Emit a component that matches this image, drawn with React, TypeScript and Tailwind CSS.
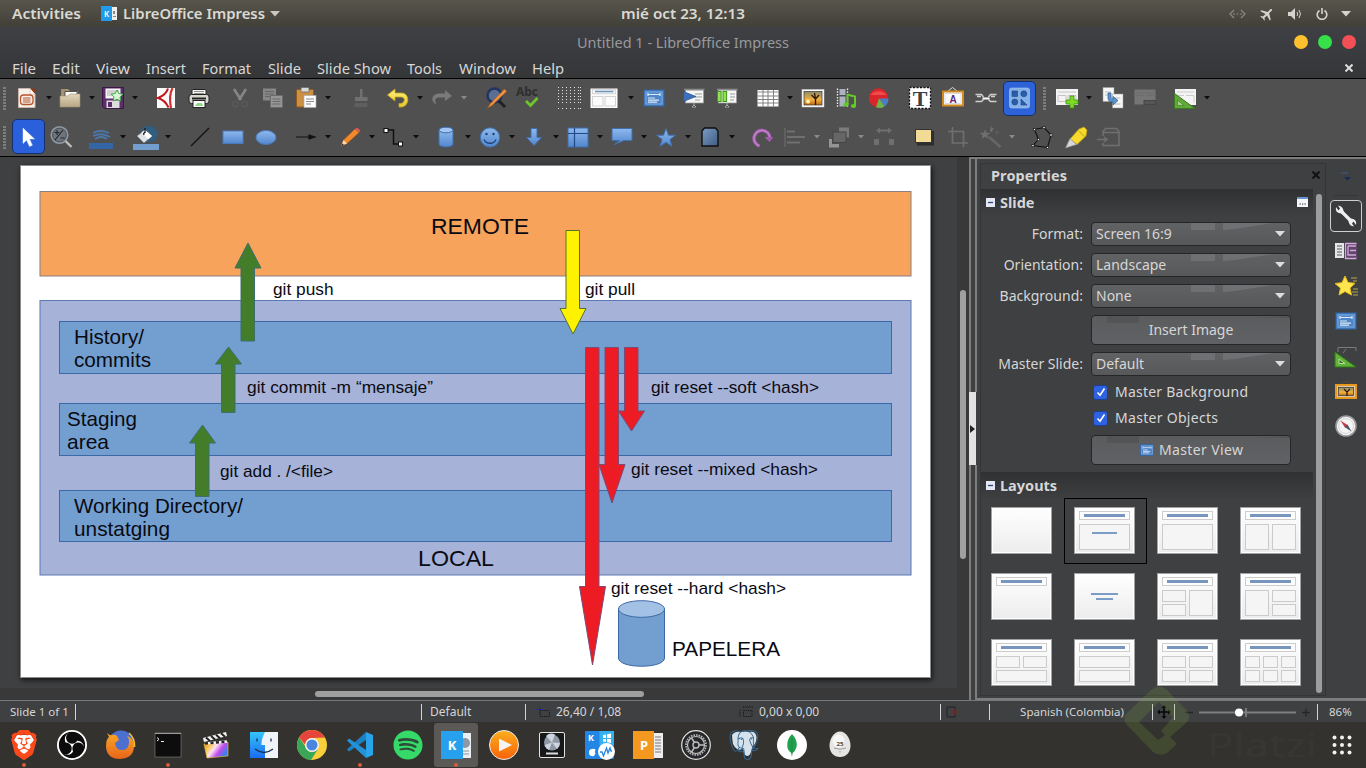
import React from "react";
import { SiBrave, SiObsstudio, SiPostgresql } from "react-icons/si";
import { FaSpotify } from "react-icons/fa";
import { MdAirplanemodeActive } from "react-icons/md";

const Defs = () => (
  <svg width="0" height="0" className="absolute">
    <defs>
      <linearGradient id="blue" x1="0" y1="0" x2="0" y2="1"><stop offset="0" stopColor="#8fb9ee" /><stop offset="1" stopColor="#5286cd" /></linearGradient>
      <linearGradient id="gold" x1="0" y1="0" x2="0" y2="1"><stop offset="0" stopColor="#fff27a" /><stop offset="1" stopColor="#e6c62c" /></linearGradient>
      <linearGradient id="tan" x1="0" y1="0" x2="0" y2="1"><stop offset="0" stopColor="#e2d6bd" /><stop offset="1" stopColor="#b8a684" /></linearGradient>
      <linearGradient id="paper" x1="0" y1="0" x2="0" y2="1"><stop offset="0" stopColor="#fff" /><stop offset="1" stopColor="#ececec" /></linearGradient>
      <linearGradient id="steel" x1="0" y1="0" x2="1" y2="1"><stop offset="0" stopColor="#7b9cc4" /><stop offset="1" stopColor="#3f5d83" /></linearGradient>
      <linearGradient id="sunset" x1="0" y1="0" x2="0" y2="1"><stop offset="0" stopColor="#8b8a6b" /><stop offset=".6" stopColor="#f2b23c" /><stop offset="1" stopColor="#c06a13" /></linearGradient>
      <linearGradient id="rainbow" x1="0" y1="0" x2="1" y2=".5"><stop offset="0" stopColor="#f56a4a" /><stop offset=".25" stopColor="#f5c23a" /><stop offset=".5" stopColor="#fbe0f5" /><stop offset=".75" stopColor="#c04be8" /><stop offset="1" stopColor="#3b7ff0" /></linearGradient>
      <linearGradient id="finder" x1="0" y1="0" x2="0" y2="1"><stop offset="0" stopColor="#35c4fb" /><stop offset="1" stopColor="#1a6cf0" /></linearGradient>
      <linearGradient id="fox" x1="0" y1="0" x2="0" y2="1"><stop offset="0" stopColor="#f9a825" /><stop offset="1" stopColor="#e8641b" /></linearGradient>
      <linearGradient id="play" x1="0" y1="0" x2="0" y2="1"><stop offset="0" stopColor="#fcae1c" /><stop offset="1" stopColor="#f8620b" /></linearGradient>
    </defs>
  </svg>
);

const slideLines = (
  <g>
    <rect x="2" y="4" width="20" height="16" fill="#4f86c9" stroke="#2f64a8" />
    <rect x="4" y="6" width="16" height="12" fill="none" stroke="#86b0e2" strokeWidth=".8" />
    <path d="M6 8.500H18M6 7v3M18 7v3M6 12h7M6 14.200h11M6 16.200h9" stroke="#dbe9f9" strokeWidth="1.200" fill="none" />
  </g>
);

const I: Record<string, React.ReactNode> = {
  new: <g><path d="M3.500 2.500H15L20 8V21.500H3.500Z" fill="#f7efe9" stroke="#c9b6aa" /><path d="M15 2.500l5 5.500v-5.500Z" fill="#8c3b18" /><path d="M15 2.500V8H20" fill="#fff" stroke="#c9b6aa" strokeWidth=".6" /><rect x="5.500" y="9" width="12.500" height="9.500" rx="3" fill="none" stroke="#b8562e" strokeWidth="1.300" /><path d="M8 12h7.500M8 14h7.500M8 16h7.500" stroke="#b8562e" strokeWidth="1.100" /></g>,
  open: <g><path d="M3 3h7l2 2h8v9H3Z" fill="#a39270" /><path d="M7 5.500h12v8H7Z" fill="#fff" stroke="#333" strokeWidth=".8" /><path d="M2 10h8l2-2h10v13H2Z" fill="url(#tan)" stroke="#a39270" strokeWidth=".6" /></g>,
  save: <g><path d="M1.500 1.500h21v21h-19l-2-2Z" fill="#5c2d6b" stroke="#3a1746" /><rect x="4.500" y="2.500" width="15" height="10" fill="#f4f4f4" /><path d="M6 5h12M6 7h12M6 9h12" stroke="#9d9d9d" strokeWidth=".8" /><rect x="5.500" y="14.500" width="13" height="7.500" fill="#dcdcdc" /><rect x="7" y="16" width="4" height="5" fill="#5c2d6b" /><path d="M16 4l1.800 3.500 4.200.7-3 2.800.6 4-3.600-1.800-3.600 1.800.6-4-3-2.800 4.200-.7Z" fill="#d8f6d6" stroke="#3fa84a" strokeWidth="1" /></g>,
  pdf: <g><rect x="3" y="2" width="18" height="20" fill="#fafafa" /><path d="M14 2.500q-2 6.500-10 9.500q7 2 10.500 9.500" fill="none" stroke="#c3161c" strokeWidth="2" /><path d="M18.500 2q-4 8-1.500 20" stroke="#cf3135" strokeWidth="2.200" fill="none" /></g>,
  print: <g><rect x="5" y="3.500" width="14" height="6" rx="1" fill="#f4f4f4" stroke="#222" /><path d="M7 5.500h10M7 7.500h10" stroke="#777" strokeWidth=".8" /><rect x="2" y="8.500" width="20" height="9" rx="2.500" fill="#d7d7d0" stroke="#222" /><path d="M5 12.500h14" stroke="#222" strokeWidth="2" /><rect x="6" y="14.500" width="12" height="7" fill="#fff" stroke="#222" /><path d="M7.500 20l3-3h4l2 3Z" fill="#8fd883" /></g>,
  cut: <g stroke="#868686" fill="none"><path d="M6 3l7 11M18 3l-7 11" strokeWidth="2.600" /><circle cx="7.500" cy="18" r="2.800" stroke="#5f5f5f" /><circle cx="16.500" cy="18" r="2.800" stroke="#5f5f5f" /></g>,
  copy: <g><rect x="2" y="2.500" width="13" height="12" fill="#868686" /><path d="M4 5.500h9M4 8h9M4 10.500h9" stroke="#666" /><rect x="9.500" y="9.500" width="12" height="12" fill="#959595" stroke="#6a6a6a" /><path d="M11.500 13h8M11.500 15.500h8M11.500 18h8" stroke="#6a6a6a" /></g>,
  paste: <g><rect x="2.500" y="3.500" width="17" height="17.500" rx="1" fill="#cc9045" stroke="#8f5a1c" /><rect x="7" y="1.500" width="8" height="4.500" rx="1" fill="#d9d9d9" stroke="#666" strokeWidth=".7" /><rect x="10" y="9.500" width="12" height="12" fill="#fcfcfc" stroke="#aaa" strokeWidth=".6" /><path d="M12 13h8M12 15.500h8M12 18h5" stroke="#8a8a8a" /></g>,
  brush: <g fill="#707070"><rect x="11" y="3" width="2.500" height="8" /><path d="M6 11h12.500v4H6Z" /><path d="M6 17h12.500l-.5 4H5Z" fill="#5f5f5f" /></g>,
  undo: <path d="M9 3L1.500 9l7.500 6v-4h6c4.500 0 4.500 5.500 0 6.500h-2v3.500h3c8-1.500 7.500-14-.5-14H9Z" fill="url(#gold)" stroke="#c8a820" strokeWidth=".8" />,
  redo: <path d="M15 4l7 6-7 5v-3.500H9c-4.500 0-4.500 4.500-2 7-7-2-6-11 2-11h6Z" fill="#7a7a7a" />,
  find: <g><circle cx="10.500" cy="9.500" r="7" fill="#5a6f93" stroke="#22345f" strokeWidth="2.500" /><path d="M15 15l6 6" stroke="#1f1f24" strokeWidth="3" /><path d="M20.500 3L6.500 17.500l-3 4.500 4.500-2.500L22.500 5.500Z" fill="#ee9440" stroke="#b45710" strokeWidth=".6" /></g>,
  abc: <g><text x="0" y="9.500" fontFamily="Noto Sans, sans-serif" fontWeight="700" fontSize="12" fill="#2e2e2e" textLength="22">Abc</text><path d="M10 15l4.500 4.500L21.500 12" fill="none" stroke="#6cc62c" strokeWidth="2.800" /></g>,
  grid: <g fill="#e0e0e0">{[0, 1, 2, 3, 4, 5, 6].map((a) => [0, 1, 2, 3, 4, 5, 6].map((b) => <rect key={a + "-" + b} x={a === 6 ? 23 : 1 + a * 4} y={b === 6 ? 22 : 1 + b * 3} width="1" height="1" />))}</g>,
  layout: <g><rect x="-1.500" y="2.500" width="27" height="19.500" fill="#fbfbfb" /><path d="M3 5.500h18.500" stroke="#6a95bd" strokeWidth="1.600" /><g fill="none" stroke="#cfcfcf" strokeWidth=".9"><rect x=".5" y="3.700" width="23" height="4" /><rect x=".5" y="10.500" width="10.500" height="9.500" /><rect x="13" y="10.500" width="10.500" height="9.500" /></g></g>,
  master: slideLines,
  show: <g><rect x="3.500" y="4" width="18" height="13" fill="#f6f6f6" stroke="#999" strokeWidth=".7" /><path d="M2 3.500h20.500" stroke="#8a8a8a" strokeWidth="1.600" /><path d="M13 8h7M13 11h7M13 14h5" stroke="#999" /><path d="M1.500 5.500L14 10.500 1.500 15.500Z" fill="#3d70bc" stroke="#27528f" strokeWidth=".7" /><path d="M12 17v2M10 21l2-2 2 2Z" stroke="#aaa" /></g>,
  show2: <g><rect x="3.500" y="4" width="18" height="13" fill="#f6f6f6" stroke="#999" strokeWidth=".7" /><path d="M2 3.500h20.500" stroke="#8a8a8a" strokeWidth="1.600" /><path d="M15 8h5M15 11h5M15 14h4" stroke="#999" /><rect x="2.500" y="5.500" width="3.600" height="10" fill="#8fdf58" stroke="#3e9c12" /><rect x="8" y="5.500" width="3.600" height="10" fill="#8fdf58" stroke="#3e9c12" /><path d="M12 17v2M10 21l2-2 2 2Z" stroke="#aaa" /></g>,
  table: <g><rect x="1.500" y="4" width="21" height="16.500" fill="#fdfdfd" /><path d="M1.500 6h21" stroke="#8b8b8b" strokeWidth="1" /><path d="M7 4v16.500M12 4v16.500M17.500 4v16.500M1.500 10h21M1.500 13.500h21M1.500 17h21" stroke="#777" strokeWidth=".9" /></g>,
  image: <g><rect x="1" y="3.500" width="22" height="17.500" fill="#fdfdfd" stroke="#d0d0d0" strokeWidth=".5" /><rect x="3" y="5.500" width="18" height="13.500" fill="url(#sunset)" stroke="#333" strokeWidth=".7" /><path d="M14.500 19v-6l-4-4M14.500 13l3.500-4M14.500 13l-1-6" stroke="#2c1a06" strokeWidth="1.400" fill="none" /><circle cx="7" cy="15.500" r="2" fill="#fff3b0" /></g>,
  media: <g><rect x="2" y="2.500" width="13" height="19" fill="#4c4c4c" /><path d="M3.500 2.500v19M13.500 2.500v19" stroke="#eee" strokeWidth="1.400" strokeDasharray="1.500 1.300" /><path d="M5.500 3h6v6h-6ZM5.500 10.500h6v10h-6Z" fill="#aab3bf" /><path d="M13 8.500l8 2v9" stroke="#62cc22" strokeWidth="2" fill="none" /><path d="M13.500 8.500V18" stroke="#62cc22" strokeWidth="2" /><ellipse cx="12" cy="18.500" rx="2.700" ry="2" fill="#62cc22" /><ellipse cx="19.500" cy="20" rx="2.700" ry="2" fill="#62cc22" /></g>,
  chart: <g><circle cx="11.500" cy="12" r="9.700" fill="#d8262a" /><path d="M12 12.500h9.500a9.500 9.500 0 0 1-4 8Z" fill="#4c7dc4" /><path d="M12 12.500l5.500 8a9 9 0 0 1-8.500.8Z" fill="#6cb748" /><path d="M3.500 9a9 7 0 0 1 16 0Z" fill="#ff6464" opacity=".6" /></g>,
  text: <g><rect x="1.500" y="1.500" width="21" height="21" fill="#fff" stroke="#111" strokeWidth="1.300" strokeDasharray="2 1.500" /><text x="12" y="20" textAnchor="middle" fontFamily="Liberation Serif, serif" fontWeight="700" fontSize="22" fill="#3c4147">T</text></g>,
  fontwork: <g><path d="M7 5l4.500-3.500L16 5" stroke="#ddd" fill="none" /><rect x="2" y="5.500" width="20" height="14" fill="#fbfbfb" stroke="#d18a1e" strokeWidth="2" /><rect x="4" y="7.500" width="16" height="10" fill="none" stroke="#b9b9d0" strokeWidth=".5" /><text x="12" y="16.500" textAnchor="middle" fontFamily="Liberation Sans, sans-serif" fontWeight="700" fontSize="10" fill="#5a2a7d">A</text></g>,
  link: <g fill="none" stroke="#cfcfcf" strokeWidth="1.400"><path d="M1.500 8.500h6l2 2.500M22.500 8.500h-6l-2 2.500M1.500 15.500h6l2-2M22.500 15.500h-6l-2-2M3 10.500h4M17 10.500h4" /><path d="M8.500 12.500h7" stroke="#fff" strokeWidth="2" /></g>,
  shapes: <g><rect x="1.500" y="2" width="20" height="20" rx="2" fill="#85b0e8" stroke="#a8c9f3" strokeWidth=".6" /><g fill="#2a5da8" stroke="#1b4686" strokeWidth=".6"><rect x="4" y="5" width="5.500" height="5.500" /><circle cx="15.800" cy="7.800" r="3" /><circle cx="6.800" cy="16" r="3" /><path d="M13 13l6 6h-6Z" /></g></g>,
  newslide: <g><rect x="1" y="3" width="22" height="16" fill="#f3f3f3" /><path d="M3 6h18M3 9.500h8v6H3ZM13 9.500h8v6h-8Z" stroke="#c4c4c4" fill="none" /><path d="M15 10h4v4h4v4h-4v4h-4v-4h-4v-4h4Z" fill="#7ddb28" stroke="#3c8e0a" strokeWidth=".8" /></g>,
  dup: <g><rect x="2" y="1.500" width="11" height="14" fill="#f6f6f6" stroke="#999" strokeWidth=".5" /><rect x="11.500" y="8" width="10.500" height="14" fill="#f6f6f6" stroke="#999" strokeWidth=".5" /><path d="M4 6h6M4 9h6M13.500 12h6M13.500 18h6" stroke="#bbb" /><path d="M7 7v5c0 3 2 4 5 4v3l5-4.500-5-4v2.500c-2 0-2-1-2-6Z" fill="#5c93c9" stroke="#2a5c90" strokeWidth=".7" /></g>,
  del: <g><rect x="1.500" y="3.500" width="21" height="15" fill="#757575" /><path d="M3 7h18M3 9.500h8M13 9.500h8" stroke="#6c6c6c" /><rect x="11" y="14.500" width="11.500" height="4" fill="#565656" stroke="#454545" /></g>,
  green: <g><rect x="2" y="3" width="21" height="16" fill="#f4f4f4" /><path d="M4 6h17M4 9.500h7M13 9.500h8v7" stroke="#ccc" fill="none" /><path d="M1.500 7.500V22.500H22Z" fill="#60a83a" stroke="#3b7a1c" /><path d="M4.500 14v5.500H11Z" fill="#9fd182" stroke="#3b7a1c" strokeWidth=".6" /></g>,
  pointer: <path d="M6 3V18.500l3.600-3.300 3 6.300 2.800-1.300-2.900-6.200H17.500Z" fill="#fff" stroke="#dfe6f5" strokeWidth=".5" />,
  zoom: <g><circle cx="10.500" cy="10" r="8.200" fill="#6f757b" stroke="#8e969e" strokeWidth="1.800" /><circle cx="10.500" cy="10" r="6.800" fill="none" stroke="#3e4a55" strokeWidth=".8" /><path d="M14 5l-8 10M5.500 7.500h5M8 5v5M11.500 13h4" stroke="#1e252c" strokeWidth="1.100" /><path d="M16.500 16l6 6" stroke="#bcbcbc" strokeWidth="2.400" /></g>,
  linecolor: <g fill="none"><path d="M4 8q7-4 16 0M4 11q8-4 17 1M6 14q6-4 12 0" stroke="#4d76a8" strokeWidth="1.800" /><rect x="0" y="18" width="24" height="6" fill="#3465a4" /></g>,
  fill: <g><circle cx="15" cy="9" r="8.500" fill="#27618f" opacity=".75" /><path d="M3 11l8-6 7 6-8 7Z" fill="#dfe3e6" stroke="#7b858d" strokeWidth=".7" /><path d="M11 5l7 6-3.500 3-7-6.500Z" fill="#fff" /><path d="M11 3v5M11 8q-2-1-1 2" stroke="#111" strokeWidth="1.200" fill="none" /><rect x="-1" y="19" width="26" height="6" fill="#729fcf" /></g>,
  line: <path d="M3 21L21 3" stroke="#111" strokeWidth="1.200" />,
  rect: <rect x="2" y="6" width="20" height="12.500" fill="url(#blue)" stroke="#4a7abb" />,
  ellipse: <ellipse cx="12" cy="12.500" rx="10" ry="7" fill="url(#blue)" stroke="#4a7abb" />,
  arrow: <path d="M2 12h14M15 10l6 2-6 2Z" stroke="#111" fill="#111" strokeWidth="1.200" />,
  pencil: <g><path d="M3.500 20.500l2-5.500L17 4l4 3.500L9 18.500Z" fill="#f08a2b" stroke="#b65a12" strokeWidth=".6" /><path d="M17 4l2-1.500 3.500 3L21 7.500Z" fill="#e0575d" /><path d="M3.500 20.500l2-5.500 3.500 3.500Z" fill="#f3dcb8" /><path d="M3.500 20.500l.8-2 1.500 1.200Z" fill="#222" /></g>,
  connector: <g><path d="M4 5h7.500v14H18" fill="none" stroke="#111" strokeWidth="1.500" /><rect x="2" y="3.500" width="4" height="4" fill="#fff" stroke="#111" /><rect x="16.500" y="17" width="4" height="4" fill="#fff" stroke="#111" /></g>,
  cylinder: <g><path d="M5 5v14c0 4 14 4 14 0V5Z" fill="url(#blue)" stroke="#3f6fae" /><ellipse cx="12" cy="5" rx="7" ry="2.800" fill="#a3c7f2" stroke="#3f6fae" /></g>,
  smiley: <g><circle cx="12" cy="12.500" r="9.700" fill="url(#blue)" stroke="#3f6fae" /><circle cx="8.500" cy="9" r="1.200" fill="#1c4278" /><circle cx="15.500" cy="9" r="1.200" fill="#1c4278" /><path d="M6 14.500c2 5 10 5 12 0" fill="none" stroke="#1c4278" strokeWidth="1.300" /></g>,
  down: <path d="M9 3.500h6v9h4.500L12 20.500 4.500 12.500H9Z" fill="url(#blue)" stroke="#3f6fae" />,
  flow: <g><rect x="2" y="3" width="20" height="19" fill="url(#blue)" stroke="#3f6fae" /><path d="M8.500 3v19M2 8.500h20" stroke="#1f4a85" strokeWidth="1.200" /></g>,
  callout: <path d="M3 3.500h18q1 0 1 1V14.500q0 1-1 1H14l-9.500 4 5-4H3q-1 0-1-1V4.500q0-1 1-1Z" fill="url(#blue)" stroke="#3f6fae" />,
  star: <path d="M12 3.500l2.500 6.700h7l-5.500 4.300 2 7L12 17.300 6 21.500l2-7L2.500 10.200h7Z" fill="url(#blue)" stroke="#3f6fae" />,
  box3d: <path d="M6.500 3h11L20 6v15H4V6Z" fill="url(#steel)" stroke="#0f0f0f" strokeWidth="1.400" />,
  rotate: <g><path d="M9.500 21a8 8 0 1 1 10.500-8" fill="none" stroke="#a05bab" strokeWidth="3.600" /><path d="M9.500 21a8 8 0 1 1 10.500-8" fill="none" stroke="#c58ccd" strokeWidth="1.200" /><path d="M14.500 12h9l-4 5Z" fill="#a05bab" /></g>,
  align: <g stroke="#707070" fill="none"><path d="M2 3v19" /><path d="M4 6.500h8M4 12h18M4 17.500h13" strokeWidth="2.200" /></g>,
  arrange: <g><path d="M12 2.500h10v10h-4V7h-6Z" fill="#7b7b7b" /><rect x="6" y="7" width="13" height="10.500" fill="#666" stroke="#444" /><path d="M2 14h3v5h7v3.500H2Z" fill="#959595" /></g>,
  distribute: <g fill="#6f6f6f"><path d="M4 5.500l4-3v2h8v-2l4 3-4 3v-2H8v2Z" /><rect x="2" y="14" width="5" height="6" /><rect x="17" y="14" width="5" height="6" /></g>,
  shadow: <g><rect x="5" y="6" width="17" height="14.500" fill="#1e1e1e" opacity=".7" /><rect x="3.500" y="4.500" width="16" height="13" fill="#f2dc95" stroke="#333" /></g>,
  crop: <path d="M6.500 2v16H22M2 6.500h15.500V22" fill="none" stroke="#6f6f6f" strokeWidth="1.700" />,
  wand: <g><path d="M11 12L22.500 22" stroke="#666" strokeWidth="2.600" /><path d="M7 5l1.300 3L12 8l-2.800 2 .8 3.300L7 11.500l-3 1.800.8-3.300L2 8l3.700 0ZM13 1l.8 2.200 2.200.300-1.700 1.500L14 7l-2-1M19 5.500v4M17 7.500h4" fill="#707070" stroke="#707070" strokeWidth=".4" /></g>,
  points: <g><path d="M4.500 4.500l9.500-2 7 7.500-3.500 12.500L3 20.500l5.500-6Z" fill="none" stroke="#111" strokeWidth="1.100" /><g fill="#fff" stroke="#111" strokeWidth=".7">{[[4.5, 4.5], [14, 2.5], [21, 10], [17.5, 22.5], [3, 20.5], [8.5, 14.5]].map(([x, y]) => <rect key={x} x={x - 1.100} y={y - 1.100} width="2.200" height="2.200" />)}</g></g>,
  glue: <g><path d="M6 14L15 4l5-2 3 3-1 6-9 8.500Z" fill="#f6da2e" stroke="#b9970d" strokeWidth=".7" /><path d="M15 6l6 6" stroke="#d8b810" strokeWidth="1.300" /><path d="M1.500 23L6 13.500l6.500 6Z" fill="#d7d7d7" stroke="#8e8e8e" strokeWidth=".6" /></g>,
  extrude: <g fill="none" stroke="#6f6f6f" strokeWidth="1.600"><path d="M6 11V6.500l2.500-3h11L22 6.500v14H6V18M6 7.500h16" /><path d="M0 14.500h9M7 12l3 2.500-3 2.500" /></g>,
};

const Icon = ({ name }: { name: string }) => (
  <svg viewBox="0 0 24 24" className="size-6 shrink-0 overflow-visible">{I[name]}</svg>
);

type Tool = [name: string, margin: string, menu?: number];
const row1a: Tool[] = [
  ["new", "ml-[8px]", 1], ["open", "ml-px", 1], ["save", "ml-px", 1], ["pdf", "ml-[11px]"], ["print", "ml-[9px]"], ["cut", "ml-[17px]"], ["copy", "ml-[9px]"],
  ["paste", "ml-[9px]", 1], ["brush", "ml-[13px]"], ["undo", "ml-[13px]", 1], ["redo", "ml-[2px]", 2], ["find", "ml-[12px]"], ["abc", "ml-[8px]"], ["grid", "ml-[17px]"],
  ["layout", "ml-[11px] mr-[6px]", 3], ["master", "ml-[2px]"], ["show", "ml-[16px]"], ["show2", "ml-[9px]"], ["table", "ml-[17px]", 1], ["image", "ml-[3px]"],
  ["media", "ml-[9px]"], ["chart", "ml-[9px]"], ["text", "ml-[17px]"], ["fontwork", "ml-[9px]"], ["link", "ml-[9px]"],
];
const row1b: Tool[] = [["newslide", "ml-[8px]", 1], ["dup", "ml-[4px]"], ["del", "ml-[8px]"], ["green", "ml-[16px]", 1]];
const row2: Tool[] = [
  ["zoom", "ml-[4px]"], ["linecolor", "ml-[16px]", 1], ["fill", "ml-px", 1], ["line", "ml-[10px]"], ["rect", "ml-[9px]"], ["ellipse", "ml-[9px]"], ["arrow", "ml-[16px]", 1],
  ["pencil", "ml-0", 1], ["connector", "ml-0", 1], ["cylinder", "ml-[8px]", 1], ["smiley", "ml-0", 1], ["down", "ml-0", 1], ["flow", "ml-0", 1], ["callout", "ml-0", 1],
  ["star", "ml-0", 1], ["box3d", "ml-0", 1], ["rotate", "ml-[8px]"], ["align", "ml-[9px]", 2], ["arrange", "ml-0", 2], ["distribute", "ml-px"], ["shadow", "ml-[16px]"],
  ["crop", "ml-[10px]"], ["wand", "ml-[8px]", 2], ["points", "ml-[8px]"], ["glue", "ml-[10px]"], ["extrude", "ml-[9px]"],
];

const Tools = ({ items, wide }: { items: Tool[]; wide?: boolean }) => (
  <>
    {items.map(([name, margin, menu]) => (
      <div key={name} className={`flex shrink-0 items-center ${margin}`}>
        <Icon name={name} />
        {menu && (
          <span className={`flex justify-center ${wide ? "w-5" : "w-[18px] pl-[2px]"}`}>
            <svg viewBox="0 0 6 4" className={`h-[4px] w-[6px] shrink-0 ${menu === 3 ? "translate-x-[5px]" : ""}`}><path d="M0 0H6L3 3.500Z" fill={menu === 2 ? "#8a8a8a" : "#0d0d0d"} /></svg>
          </span>
        )}
      </div>
    ))}
  </>
);

const Handle = ({ className }: { className: string }) => (
  <svg viewBox="0 0 4 24" className={`h-6 w-1 shrink-0 ${className}`}><path d="M1.500 1v23" stroke="#7e7e7e" strokeWidth="3" strokeDasharray="2 1" /></svg>
);

const menus: [string, string, string][] = [
  ["File", "w-[40px]", "24"], ["Edit", "w-[44px]", "28"], ["View", "w-[50px]", "34"], ["Insert", "w-[56px]", "40"], ["Format", "w-[66px]", "49"],
  ["Slide", "w-[49px]", "33"], ["Slide Show", "w-[90px]", "74"], ["Tools", "w-[52px]", "35"], ["Window", "w-[73px]", "57"], ["Help", "w-[40px]", "32"],
];

const arrowUp = (x: number, tip: number, neck: number, end: number) => `M${x} ${tip}L${x + 13} ${neck}H${x + 6.5}V${end}H${x - 7}V${neck}H${x - 13}Z`;

const labels: [string, number, number, number, number][] = [
  ["REMOTE", 431, 234, 98, 22.7], ["LOCAL", 418, 566, 76, 22.7], ["PAPELERA", 672, 656, 108, 20.5],
  ["History/", 74, 344, 70, 20.7], ["commits", 74, 367, 77, 20.7], ["Staging", 67, 426, 70, 20.7], ["area", 67, 449, 42, 20.7],
  ["Working Directory/", 74, 513, 169, 20.7], ["unstatging", 74, 536, 96, 20.7],
  ["git push", 273, 295, 60.5, 17], ["git pull", 585, 295, 50, 17], ["git commit -m “mensaje”", 247, 393, 186, 17], ["git add . /<file>", 220, 477, 113, 17],
  ["git reset --soft <hash>", 651, 393, 168, 17], ["git reset --mixed <hash>", 631, 475, 187, 17], ["git reset --hard <hash>", 611, 594, 175, 17],
];

const Diagram = () => (
  <svg viewBox="21 166 909 511" className="block h-full w-full">
    <rect x="40" y="191.500" width="871" height="84.500" fill="#f7a35b" stroke="#8a7f84" />
    <rect x="40" y="300.500" width="871" height="274.500" fill="#a6b2d8" stroke="#5c79b0" />
    {[[321.5, 52], [403.5, 52], [490.5, 51]].map(([y, h]) => <rect key={y} x="59.500" y={y} width="832" height={h} fill="#729fcf" stroke="#3c68a5" />)}
    <g fill="#437d29" stroke="#3d6f6d" strokeWidth="1">
      <path d={arrowUp(248, 243, 268, 341)} /><path d={arrowUp(228.5, 347, 364, 412.500)} /><path d={arrowUp(202.500, 425, 443, 496.500)} />
    </g>
    <path d={arrowUp(573, 334, 308.500, 230.500)} fill="#fff200" stroke="#56702e" />
    <g fill="#ed1c24" stroke="#7a4a78">
      <path d={arrowUp(592.500, 665, 586.500, 347.500)} /><path d={arrowUp(612, 503, 464.500, 347.500)} /><path d={arrowUp(631.500, 431, 411, 347.500)} />
    </g>
    <path d="M618.500 609v49c0 11 46 11 46 0v-49Z" fill="#729fcf" stroke="#3c68a5" />
    <ellipse cx="641.500" cy="609" rx="23" ry="8.300" fill="#a3c1e4" stroke="#3c68a5" />
    <g fontFamily="Liberation Sans, Arial, sans-serif" fill="#0a0a12">
      {labels.map(([t, x, y, w, s]) => <text key={t} x={x} y={y} fontSize={s} textLength={w} lengthAdjust="spacingAndGlyphs">{t}</text>)}
    </g>
  </svg>
);

const Select = ({ label, value }: { label: string; value: string }) => (
  <div className="flex h-6 items-center">
    <span className="w-[102px] shrink-0 text-right">{label}</span>
    <div className="relative ml-2 flex h-6 w-[200px] items-center justify-between overflow-hidden rounded-[4px] border border-[#252628] bg-linear-to-b from-[#616264] to-[#575859] pr-[5px] pl-1">
      <svg viewBox="0 0 198 22" className="absolute inset-0 h-full w-full"><path d="M99 0h24v7H99ZM131 0h50l-38 6-12 1Z" fill="#747678" opacity=".75" /></svg>
      <span className="relative">{value}</span>
      <svg viewBox="0 0 10 6" className="relative h-[6px] w-[10px]"><path d="M0 0H10L5 5.500Z" fill="#dedede" /></svg>
    </div>
  </div>
);

const Button = ({ children }: { children: React.ReactNode }) => (
  <div className="relative ml-[110px] flex h-[30px] w-[200px] items-center justify-center gap-1 overflow-hidden rounded-[4px] border border-[#252628] bg-linear-to-b from-[#5b5c5e] to-[#606164]">
    <svg viewBox="0 0 198 28" className="absolute inset-0 h-full w-full"><path d="M15 0h32v7H15ZM160 2l36-2v2Z" fill="#505153" opacity=".7" /></svg>
    {children}
  </div>
);

const Check = ({ label, len }: { label: string; len: number }) => (
  <div className="ml-[112px] flex h-[26px] items-center gap-[7px]">
    <span className="grid size-[15px] place-items-center rounded-[3px] border border-[#1c3f9a] bg-[#2f62e0]">
      <svg viewBox="0 0 12 12" className="size-3"><path d="M2.500 6.500L5 9.200 9.500 2.500" fill="none" stroke="#fff" strokeWidth="1.600" /></svg>
    </span>
    <svg className="h-5 w-[140px] overflow-visible"><text y="14.500" textLength={len} fill="currentColor">{label}</text></svg>
  </div>
);

const Section = ({ title, more }: { title: string; more?: boolean }) => (
  <div className="mr-[12px] flex h-[30px] items-center bg-linear-to-b from-[#303133] to-[#404143] pb-[3px] pl-[5px]">
    <svg viewBox="0 0 9 9" className="mb-px size-[9px]"><rect width="9" height="9" fill="#e3e8f4" /><path d="M2 4.500h5" stroke="#2b4577" strokeWidth="1.300" /></svg>
    <span className="ml-[5px] text-[14.5px] leading-none font-bold">{title}</span>
    {more && <svg viewBox="0 0 11 10" className="mr-[5px] mb-px ml-auto h-[10px] w-[11px]"><rect width="11" height="10" fill="#f4f6fa" /><path d="M0 1h11" stroke="#6b94cf" strokeWidth="2" /><path d="M2.500 7h1.200M5 7h1.200M7.500 7h1.200" stroke="#222" strokeWidth="1.200" /></svg>}
  </div>
);

const panes: number[][][] = [
  [], [[5, 17, 50, 25]], [[5, 17, 50, 25]], [[5, 17, 23, 25], [32, 17, 23, 25]],
  [], [], [[5, 17, 23, 11], [5, 31, 23, 11], [32, 17, 23, 25]], [[5, 17, 23, 25], [32, 17, 23, 11], [32, 31, 23, 11]],
  [[5, 17, 23, 11], [32, 17, 23, 11], [5, 31, 50, 11]], [[5, 17, 50, 11], [5, 31, 50, 11]],
  [[5, 17, 23, 11], [32, 17, 23, 11], [5, 31, 23, 11], [32, 31, 23, 11]],
  [[5, 17, 14, 11], [23, 17, 14, 11], [41, 17, 14, 11], [5, 31, 14, 11], [23, 31, 14, 11], [41, 31, 14, 11]],
];

const Thumb = ({ i }: { i: number }) => (
  <svg viewBox="0 0 61 47" className="h-[47px] w-[61px]">
    <rect x=".500" y=".500" width="60" height="46" fill="url(#paper)" stroke="#a2a2a2" />
    <rect x="1.500" y="1.500" width="58" height="44" fill="none" stroke="#fff" />
    {i !== 0 && i !== 5 && <g><rect x="5.500" y="4.500" width="50" height="8" fill="#fdfdfd" stroke="#cdcdcd" /><path d="M10 8.500H51" stroke="#7896bd" strokeWidth="3" /></g>}
    {panes[i].map(([x, y, w, h]) => <rect key={`${x}-${y}`} x={x + 0.5} y={y + 0.5} width={w} height={h} fill="#f5f5f5" stroke="#cbcbcb" />)}
    {i === 1 && <path d="M18 26H43" stroke="#7b9cc6" strokeWidth="2" />}
    {i === 5 && <path d="M17 21H44M22 26H39" stroke="#7b9cc6" strokeWidth="2" />}
  </svg>
);

const tabs: React.ReactNode[] = [
  <g key="p"><path d="M1 4h9v15H1Z" fill="#e6e6e6" /><path d="M3 7h5M3 10h5M3 13h5M3 16h5" stroke="#555" /><path d="M12 4h11v15H12Z" fill="#8a4a98" opacity=".45" /><path d="M11.500 4v15.500h11M14 7v9h8M11.500 4.500h11M14 7h8M16 11.500h6" stroke="#d3a8dc" fill="none" strokeWidth="1.300" /></g>,
  <g key="s"><path d="M11 2l3 6.500 7 .8-5 4.800 1.500 7L11 17.500 5 21l1.500-7L1 9.500l7-.8Z" fill="#ffe650" stroke="#e5bd15" /><path d="M17 4h6M19 7h4M19 15h5M18 18h6M19 21h5" stroke="#b5a84a" strokeWidth="1" /></g>,
  <g key="m">{slideLines}</g>,
  <g key="t"><path d="M4 3.500H22M4 3.500V8M22 3.500V7M12 5l-3 4" stroke="#7b7b7b" fill="none" /><path d="M1 8V23H22Z" fill="#61b23a" stroke="#2c7a13" /><path d="M5 15v4.500h6Z" fill="#3f6b2c" stroke="#b3e096" /></g>,
  <g key="g"><path d="M7 5l5-3 5 3" stroke="#5e4a27" fill="none" /><rect x="2" y="6" width="20" height="13" fill="#d9c9a8" stroke="#e8971d" strokeWidth="2" /><rect x="4.500" y="8.500" width="15" height="8" fill="url(#sunset)" stroke="#333" strokeWidth=".7" /><path d="M13 17v-4l-3-3M13 13l3-3" stroke="#2c1a06" strokeWidth="1.300" fill="none" /></g>,
  <g key="c"><circle cx="12" cy="12" r="10" fill="#f4f4f4" stroke="#9b9b9b" strokeWidth="1.600" /><circle cx="12" cy="12" r="7.500" fill="none" stroke="#c9c9c9" strokeWidth=".7" /><path d="M6.500 6.500l7 4.500-2.500 2.500Z" fill="#d0363f" /><path d="M17.500 17.500l-7-4.500 3-2.500Z" fill="#4b5563" /></g>,
];

const dock: React.ReactNode[] = [
  <g key="brave"><path d="M8 5h14l3 5-2 10-8 7-8-7L5 10Z" fill="#fff" /><SiBrave x={0} y={0} size={30} color="#fa4a1c" /></g>,
  <g key="obs"><circle cx="15" cy="15" r="15" fill="#fff" /><circle cx="15" cy="15" r="13.700" fill="#0c0c0c" /><SiObsstudio x={0.5} y={0.5} size={29} color="#fff" /></g>,
  <g key="fox"><circle cx="16" cy="13.500" r="13" fill="#4c70d0" /><path d="M2 3q3 3 5 2 3-1 5 1l2 4-4 3q1 8 8 7 6-1 6-8 0-4-2-6 6 2 7 8 1 14-14 15Q2 29 1 17q0-8 3-10Z" fill="url(#fox)" /><path d="M24 3q6 5 5.500 14" fill="none" stroke="#f9c12e" strokeWidth="1.500" /></g>,
  <g key="term"><rect x="2" y="3" width="26" height="24" fill="#0d0d0d" stroke="#999" strokeWidth=".5" /><path d="M2 3.500h26" stroke="#9c9c9c" /><path d="M4 7.500l2 1.800-2 1.700M8 11.500h3" stroke="#eee" fill="none" /></g>,
  <g key="fcp"><path d="M3 14l24-2v14L6 28Z" fill="url(#rainbow)" stroke="#e9c93a" strokeWidth=".6" /><path d="M2 8l23-6 1 4L3 12Z" fill="#f3f3f3" /><path d="M5 7.500l4 3.500M10 6l4 3.500M15 4.700l4 3.500M20 3.300l4 3.500" stroke="#222" strokeWidth="2" /><path d="M4 13.500l22-2" stroke="#f3f3f3" strokeWidth="2.500" /><path d="M4 13.500l22-2" stroke="#222" strokeWidth="2.500" strokeDasharray="3 2.500" /></g>,
  <g key="finder"><rect x="1" y="2" width="28" height="26" fill="#f0f3f8" /><path d="M1 2h15q-4 8-3.500 13h3.500V28H1Z" fill="url(#finder)" /><path d="M8 8.500v3M22 8.500v3M6 19q9 7 18 0" stroke="#18304f" fill="none" strokeWidth="1.300" /></g>,
  <g key="chrome"><circle cx="15" cy="15" r="15" fill="#f9cf3b" /><path d="M2 7.500A15 15 0 0 1 28 7.500L15 8Q9 9 8.500 15Z" fill="#e5453a" /><path d="M2 7.500A15 15 0 0 0 14 30l7-11q-4 4-9 2.500Z" fill="#39a757" /><circle cx="15" cy="15" r="7" fill="#f4f4f4" /><circle cx="15" cy="15" r="5.500" fill="#4a86e0" /></g>,
  <g key="code"><path d="M21 2L4 17.500 2 19.500 4 21.500 21 10Z" fill="#1b80c4" /><path d="M21 28L4 12.500 2 10.500 4 8.500 21 20Z" fill="#2392d8" /><path d="M21 2l7 3v20L21 28Z" fill="#29a3ea" /></g>,
  <g key="spot"><circle cx="15" cy="15" r="13" fill="#2f4a38" /><FaSpotify x={0} y={0} size={30} color="#35d967" /></g>,
  <g key="impress"><rect x="14" y="3" width="16" height="25" fill="#eceff1" /><circle cx="24" cy="13" r="5" fill="#8e98a5" /><path d="M22 21h6M22 24h6" stroke="#8e98a5" /><rect x="0" y="1" width="22" height="28" fill="#27a1ed" /><text x="11" y="20" textAnchor="middle" fontFamily="Noto Sans, sans-serif" fontSize="13" fontWeight="700" fill="#fff">K</text></g>,
  <g key="play"><circle cx="15" cy="15" r="14.500" fill="url(#play)" stroke="#e8edf0" strokeWidth="1" /><path d="M10 8.500L23 15 10 21.500Z" fill="#f4f4f4" /></g>,
  <g key="logic"><rect x="2.500" y="2.500" width="25" height="25" rx="1.500" fill="#17181a" stroke="#e4e4e4" /><circle cx="15" cy="12.500" r="8" fill="#8e98a6" /><path d="M15 12.500L9 6a8 8 0 0 1 9-1.500ZM15 12.500l8 .5a8 8 0 0 1-3 6ZM15 12.500l-3 7.500a8 8 0 0 1-4.500-5Z" fill="#cdd6e0" /><path d="M9 23.500h12" stroke="#dcdcdc" strokeWidth="2" /></g>,
  <g key="wine"><rect x="0" y="1" width="29" height="28" rx="1" fill="#2386e4" /><path d="M14.500 1H29V15H14.500Z" fill="#35b1f1" /><text x="3" y="11" fontFamily="Noto Sans, sans-serif" fontSize="9" fontWeight="700" fill="#fff">K</text><path d="M18 5l3-.5v3.500h-3ZM22 4.300l4-.8V8h-4ZM18 9h3v3l-3-.5ZM22 9h4v4l-4-.8Z" fill="#fff" /><path d="M7 19q3-1 3.500 1-1.500 2 0 3.500-1.500 3.500-3.500 2.500-3 0-3-3.500 0-3.500 3-3.500Z" fill="#fff" /><circle cx="21.500" cy="21.500" r="8.500" fill="#fff" /><path d="M15 22h2l1.500 4 3-8 1.500 5 2-5 1 3h1" fill="none" stroke="#2386e4" strokeWidth="1.300" /></g>,
  <g key="ppt"><rect x="14" y="3" width="16" height="25" fill="#eee" /><path d="M22 7h6M22 10h6M22 13h6M22 16h6M22 19h6M22 22h6" stroke="#777" /><rect x="0" y="1" width="21" height="28" fill="#f5981f" /><text x="11" y="20" textAnchor="middle" fontFamily="Noto Sans, sans-serif" fontSize="13" fontWeight="700" fill="#fff">P</text></g>,
  <g key="gear" fill="none"><circle cx="15" cy="15" r="14.300" fill="#26272b" stroke="#e2e2e2" strokeWidth="1.200" /><circle cx="15" cy="15" r="10" stroke="#b5b5b5" strokeWidth="1.700" strokeDasharray="1.600 1" /><circle cx="15" cy="15" r="8.500" stroke="#c3c3c3" strokeWidth="1.200" /><circle cx="15" cy="15" r="3" stroke="#bdbdbd" strokeWidth="1.400" /><path d="M18 15h5.500M13.500 12.500L10.500 8M13.500 17.500L10.500 22" stroke="#bdbdbd" strokeWidth="1.500" /></g>,
  <g key="pg"><path d="M3 5Q6 1 12 2q4-1 8 0 7-1 7.500 5 0 6-4 10-2 9-5 9-4 0-4.500-7-6 3-10-5-1-6-1-9Z" fill="#d5e2ec" /><SiPostgresql x={0} y={0} size={30} color="#336791" /></g>,
  <g key="mongo"><circle cx="15" cy="15" r="15" fill="#fff" /><path d="M15 4q6 6 4.500 13-1 4-4 6l-.3 3h-.6l-.3-3q-4-3-4-7Q10 9 15 4Z" fill="#21a04e" /><path d="M15 8v16" stroke="#15803d" strokeWidth=".6" /></g>,
  <g key="egg"><path d="M15 1.500c6 0 10.500 7.500 10.500 14 0 7-4.500 11.500-10.500 11.500S4.500 22.500 4.500 15.500C4.500 9 9 1.500 15 1.500Z" fill="#e5e5e3" /><ellipse cx="13.500" cy="11" rx="6" ry="6.500" fill="#fff" opacity=".7" /><text x="15" y="16" textAnchor="middle" fontFamily="Noto Sans, sans-serif" fontSize="6" fontWeight="700" fill="#444">25</text><path d="M9 18q6 2.500 12 0M15 21v1.500" stroke="#888" fill="none" strokeWidth=".8" /></g>,
];

const Sep = () => <span className="h-4 w-px shrink-0 bg-[#d4d4d4]" />;

export default function App() {
  return (
    <div className="relative flex h-[768px] w-[1366px] flex-col overflow-hidden bg-[#3f4042] font-['Noto_Sans',sans-serif] text-[14px] leading-none text-[#d6d6d6]">
      <Defs />
      <header className="flex h-[27px] shrink-0 items-center bg-linear-to-b from-[#58554c] to-[#414038] text-[14.5px] font-semibold text-[#dbd9d3]">
        <span className="flex w-[101px] items-center pl-3"><svg className="h-5 w-[70px] overflow-visible"><text y="15" textLength="69" lengthAdjust="spacingAndGlyphs" fill="currentColor">Activities</text></svg></span>
        <svg viewBox="0 0 16 15" className="h-[15px] w-4"><rect x="8" y="1" width="8" height="13" fill="#eee" /><path d="M12 5h2v3h-2ZM12 10h3v1h-3Z" fill="#888" /><rect width="11" height="15" fill="#1f9bea" /><text x="3" y="10.500" fontSize="8" fill="#fff">K</text></svg>
        <svg className="ml-[6px] h-5 w-[142px] overflow-visible"><text y="15" textLength="142" lengthAdjust="spacingAndGlyphs" fill="currentColor">LibreOffice Impress</text></svg>
        <svg viewBox="0 0 10 6" className="ml-[5px] h-[6px] w-[10px]"><path d="M0 0H10L5 5.500Z" fill="#c9c7c1" /></svg>
        <svg className="ml-[341px] h-5 w-[124px] overflow-visible"><text y="15" textLength="124" lengthAdjust="spacingAndGlyphs" fill="currentColor">mié oct 23, 12:13</text></svg>
        <div className="mr-[15px] ml-auto flex items-center text-[#d5d3cd]">
          <svg viewBox="0 0 17 10" className="mr-[13px] h-[10px] w-[17px]"><path d="M5 1L1 5l4 4M12 1l4 4-4 4M4 5h2M7.500 5h2M11 5h2" fill="none" stroke="#8c8a83" strokeWidth="1.200" /></svg>
          <MdAirplanemodeActive className="mr-[13px] size-[16px] rotate-45" />
          <svg viewBox="0 0 14 12" className="mr-[14px] h-3 w-[14px]"><path d="M0 4h3l4-4v12L3 8H0Z" fill="currentColor" /><path d="M9 4q1.500 2 0 4M11 2q3 4 0 8" stroke="currentColor" fill="none" /></svg>
          <svg viewBox="0 0 12 12" className="mr-[13px] size-3"><path d="M3.500 2.500a4.800 4.800 0 1 0 5 0M6 0v6" fill="none" stroke="currentColor" strokeWidth="1.600" /></svg>
          <svg viewBox="0 0 10 6" className="h-[6px] w-[10px]"><path d="M0 0H10L5 5.500Z" fill="currentColor" /></svg>
        </div>
      </header>

      <div className="flex h-[52px] shrink-0 flex-col border-b border-black bg-linear-to-b from-[#3f4044] to-[#353638]">
        <div className="flex h-[31px] items-center">
          <svg className="ml-[577px] h-5 w-[212px] overflow-visible"><text y="15" fontSize="14.500" textLength="212" fill="#98999b">Untitled 1 - LibreOffice Impress</text></svg>
          <div className="mr-[10px] ml-auto flex gap-[10px] pb-px">
            <span className="size-[14px] rounded-full bg-[#fdc02f]" /><span className="size-[14px] rounded-full bg-[#36e049]" /><span className="size-[14px] rounded-full bg-[#f25056]" />
          </div>
        </div>
        <nav className="flex h-5 items-center pl-3">
          {menus.map(([m, w, len]) => (
            <svg key={m} className={`h-5 shrink-0 overflow-visible ${w}`}><text y="15.500" fontSize="14.500" textLength={len} lengthAdjust="spacingAndGlyphs" fill="#d6d6d6">{m}</text></svg>
          ))}
          <svg viewBox="0 0 8 8" className="mr-[13px] ml-auto size-2"><path d="M.5 .5L7.500 7.500M7.500 .5L.5 7.500" stroke="#ddd" strokeWidth="2" /></svg>
        </nav>
      </div>

      <div className="flex h-[78px] shrink-0 flex-col border-b border-black bg-[#505050]">
        <div className="flex h-[38px] items-center">
          <Handle className="ml-[3px]" />
          <Tools items={row1a} />
          <span className="ml-[5px] flex h-[35px] w-[33px] shrink-0 items-center justify-center rounded-[5px] border border-[#15306f] bg-[#2d62d8]"><Icon name="shapes" /></span>
          <Handle className="ml-[7px]" />
          <Tools items={row1b} />
        </div>
        <div className="flex h-[39px] items-center">
          <Handle className="ml-[3px]" />
          <span className="ml-[5px] flex h-[35px] w-[33px] shrink-0 items-center justify-center rounded-[5px] border border-[#15306f] bg-[#2a60dc]"><Icon name="pointer" /></span>
          <Tools items={row2} wide />
        </div>
      </div>

      <main className="flex h-[543px] shrink-0">
        <section className="flex w-[969px] shrink-0 flex-col">
          <div className="flex h-[531px]">
            <div className="w-[957px] pt-[8px] pl-[20px]">
              <div className="h-[513px] w-[911px] border border-[#8d8d8d] bg-white shadow-[1px_2px_5px_#111]"><Diagram /></div>
            </div>
            <div className="w-3 bg-[#393939] pt-[133px] pl-[3px]"><div className="h-[269px] w-[6px] rounded-full bg-[#a0a0a0]" /></div>
          </div>
          <div className="h-3 bg-[#3a393a] pt-[3px] pl-[315px]"><div className="h-[6px] w-[329px] rounded-full bg-[#a09fa0]" /></div>
        </section>
        <div className="flex w-[8px] shrink-0 flex-col">
          <div className="h-[235px] border-x-2 border-t-2 border-[#7c7d7e]" />
          <div className="flex h-[73px] w-[7px] items-center bg-[#e3e3e3]"><svg viewBox="0 0 5 8" className="ml-px h-2 w-[5px]"><path d="M0 0L5 4 0 8Z" fill="#222" /></svg></div>
          <div className="flex-1 border-x-2 border-[#7c7d7e]" />
        </div>
        <aside className="flex min-w-0 flex-1 border-t-2 border-b-2 border-[#7c7d7e] pl-[3px]">
          <div className="mt-[4px] mb-[2px] flex w-[346px] shrink-0 flex-col border border-[#343536]">
            <div className="flex h-[25px] shrink-0 items-center pb-[2px] pl-[10px] text-[14.5px] font-bold">
              <svg className="h-5 w-20 overflow-visible"><text y="15" textLength="76" fill="currentColor">Properties</text></svg>
              <svg viewBox="0 0 8 8" className="mr-[5px] mb-px ml-auto size-2"><path d="M.5 .5L7.500 7.500M7.500 .5L.5 7.500" stroke="#111" strokeWidth="2" /></svg>
            </div>
            <div className="relative flex flex-1 flex-col">
              <Section title="Slide" more />
              <div className="flex flex-col pt-[3px] text-[14px]">
                <div className="flex flex-col gap-[7px]">
                  <Select label="Format:" value="Screen 16:9" />
                  <Select label="Orientation:" value="Landscape" />
                  <Select label="Background:" value="None" />
                  <Button><span className="relative">Insert Image</span></Button>
                </div>
                <div className="mt-[7px] mb-[3px]"><Select label="Master Slide:" value="Default" /></div>
                <Check label="Master Background" len={133} />
                <Check label="Master Objects" len={103} />
                <div className="mt-[4px]"><Button><svg viewBox="0 2 24 20" className="relative h-[14px] w-4">{slideLines}</svg><svg className="relative h-5 w-[85px] overflow-visible"><text y="15" textLength="84" fill="currentColor">Master View</text></svg></Button></div>
              </div>
              <div className="mt-[7px]"><Section title="Layouts" /></div>
              <div className="-mt-[4px] grid grid-cols-[repeat(4,83px)] auto-rows-[66px]">
                {panes.map((_, i) => <div key={i} className={`border pt-[8px] pl-[9px] ${i === 1 ? "border-black" : "border-transparent"}`}><Thumb i={i} /></div>)}
              </div>
              <div className="absolute top-[5px] right-[3px] h-[499px] w-[6px] rounded-full bg-[#9d9d9d]" />
            </div>
          </div>
          <div className="flex flex-1 flex-col items-center pt-[11px]">
            <svg viewBox="0 0 14 12" className="h-3 w-[14px]"><path d="M2 3h7" stroke="#3b5b93" /><path d="M5 7h7L8.500 10.500Z" fill="#172b57" /></svg>
            <div className="mt-[13px] h-px w-6 bg-[#353638]" />
            <div className="mt-[4px] flex size-8 items-center justify-center rounded-[4px] border border-[#cfcfcf] bg-[#3a3b3d]">
              <svg viewBox="0 0 24 24" className="size-6"><path d="M7 7L17 17" stroke="#f0f0f0" strokeWidth="3.200" /><path d="M2 3q-1 5 3 6l4 1 1-1-1-4q-1-3-5-3.500l2 3-1.500 2Z M22 21q1-5-3-6l-4-1-1 1 1 4q1 3 5 3.500l-2-3 1.500-2Z" fill="#f0f0f0" /></svg>
            </div>
            <div className="mt-[7px] flex flex-col gap-[11px]">{tabs.map((t, i) => <svg key={i} viewBox="0 0 24 24" className="size-6 overflow-visible">{t}</svg>)}</div>
          </div>
        </aside>
      </main>

      <footer className="flex h-[22px] shrink-0 items-center border-t border-[#77787a] text-[11.5px]">
        <span className="w-[75px] pl-[10px] whitespace-nowrap">Slide 1 of 1</span><Sep />
        <span className="w-[345px]" /><Sep />
        <span className="w-[103px] pl-[8px] text-[12px]">Default</span><Sep />
        <div className="flex w-[414px] items-center pl-[10px]">
          <svg viewBox="0 0 14 12" className="h-3 w-[14px]"><path d="M3.500 0v8M0 3.500h7" stroke="#272a9d" /><path d="M4 4.500h9.500v6H4Z" fill="none" stroke="#151515" strokeDasharray="1.200 1" /></svg>
          <span className="ml-[6px] w-[183px] text-[12px]">26,40 / 1,08</span>
          <svg viewBox="0 0 14 12" className="h-3 w-[14px]"><path d="M1 4v7M4.500 4.500H13v6H4.500ZM4 1h10" fill="none" stroke="#151515" strokeDasharray="1.200 1" /></svg>
          <span className="ml-[6px] text-[12px]">0,00 x 0,00</span>
        </div><Sep />
        <span className="w-[48px] pl-[5px]"><svg viewBox="0 0 12 12" className="size-3"><path d="M1 1h8v10H1Z" fill="none" stroke="#222" /><path d="M6 6h6M9 3v6" stroke="#8c1d1d" /></svg></span><Sep />
        <span className="w-[162px] pl-[2px] text-center">Spanish (Colombia)</span><Sep />
        <span className="flex w-[21px] justify-center"><svg viewBox="0 0 14 14" className="size-[14px]"><path d="M7 1v12M1 7h12" stroke="#080808" strokeWidth="1.600" /><path d="M7 0l2.500 3h-5ZM7 14l2.500-3h-5ZM0 7l3-2.500v5ZM14 7l-3-2.500v5Z" fill="#080808" /></svg></span><Sep />
        <svg viewBox="0 0 142 16" className="h-4 w-[142px] shrink-0"><path d="M10 8.500h8M127 8.500h8M131 4.500v8" stroke="#252525" strokeWidth="1.300" /><path d="M24 8.500h97M71 4v9" stroke="#7e7e7e" strokeWidth="1.800" /><circle cx="64" cy="8.500" r="4" fill="#fff" /></svg><Sep />
        <span className="pl-[11px]">86%</span>
      </footer>

      <div className="flex flex-1 items-center bg-[#33322e]">
        {dock.map((d, i) => (
          <div key={i} className="relative flex h-[46px] w-12 items-center justify-center">
            <div className={`flex h-11 w-11 items-center justify-center rounded-[3px] ${i === 9 ? "bg-[#5a5955]" : ""}`}><svg viewBox="0 0 30 30" className="size-[30px] overflow-visible">{d}</svg></div>
            {[0, 3, 7, 9].includes(i) && <span className="absolute bottom-[1px] left-[22px] size-1 rounded-full bg-[#d8593a]" />}
          </div>
        ))}
        <svg viewBox="0 0 20 20" className="mr-[14px] ml-auto size-5 shrink-0">{[2.5, 10, 17.5].map((x) => [2.5, 10, 17.5].map((y) => <circle key={x + "," + y} cx={x} cy={y} r="2" fill="#f1f1f1" />))}</svg>
      </div>

      <svg viewBox="1126 684 240 84" className="pointer-events-none absolute right-0 bottom-0 h-[84px] w-[240px] overflow-visible">
        <path d="M1151 690q8-7 16 0l20 21q4 6 0 11l-19 17-7-8 12-14-14-15-20 20 19 18 9-6 10 10-10 9q-7 4-14-1l-27-28q-4-6 1-11Z" fill="#7da33a" opacity=".2" />
        <text x="1207" y="757" fontFamily="Noto Sans, sans-serif" fontSize="32" textLength="110" lengthAdjust="spacingAndGlyphs" fill="#fff" opacity=".02">Platzi</text>
      </svg>
    </div>
  );
}
